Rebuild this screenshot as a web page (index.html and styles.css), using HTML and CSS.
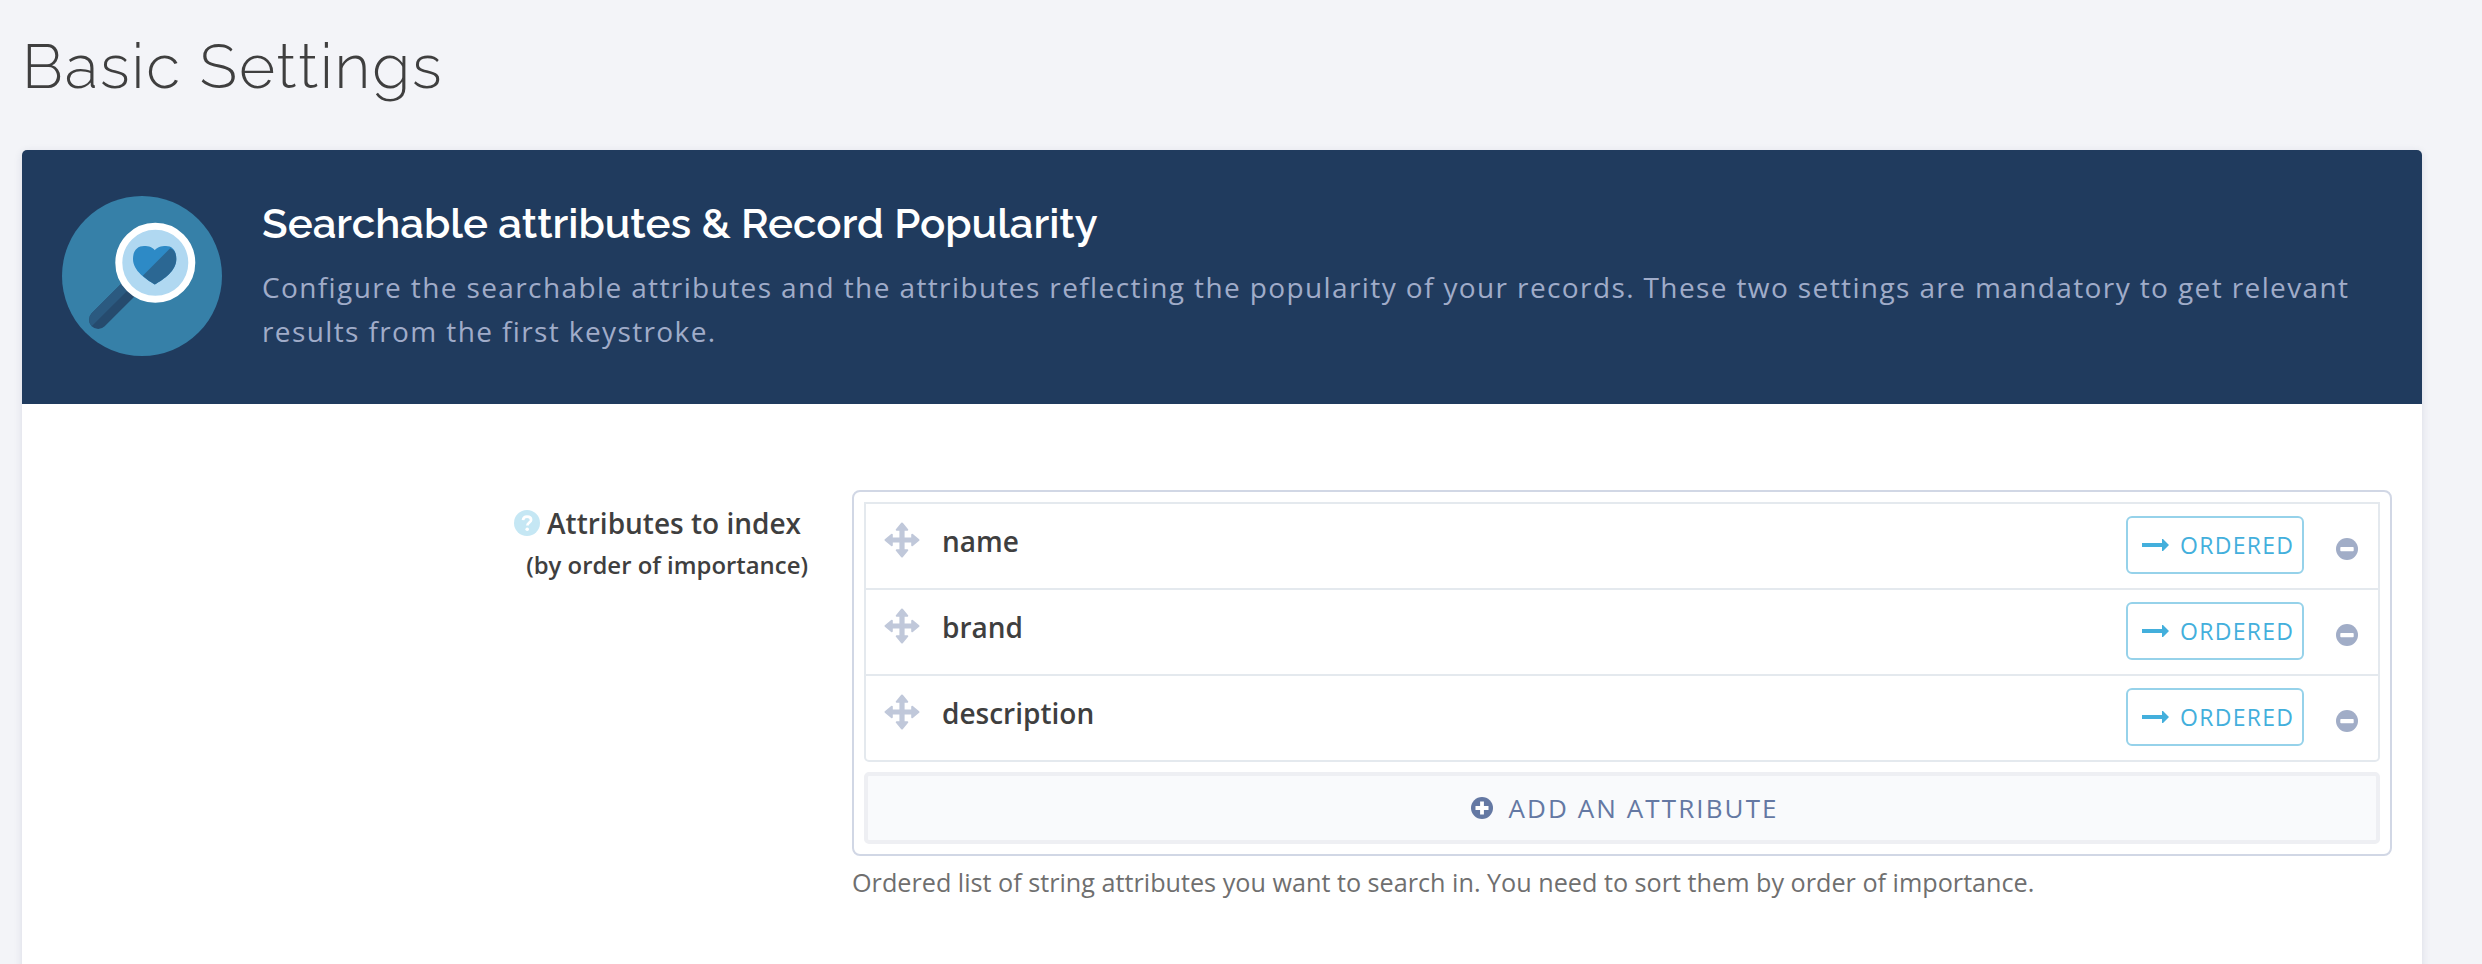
FILE: index.html
```html
<!DOCTYPE html>
<html lang="en">
<head>
<meta charset="utf-8">
<title>Basic Settings</title>
<link rel="stylesheet" href="styles.css">
</head>
<body>
<svg class="sprite" width="0" height="0" aria-hidden="true">
  <symbol id="move" viewBox="0 0 36 36">
    <path d="M18 1.500 L23.300 7.800 H19.600 V16.400 H28.200 V12.700 L34.500 18 L28.200 23.300 V19.600 H19.600 V28.200 H23.300 L18 34.500 L12.700 28.200 H16.400 V19.600 H7.800 V23.300 L1.500 18 L7.800 12.700 V16.400 H16.400 V7.800 H12.700 Z" fill="currentColor" stroke="currentColor" stroke-width="2" stroke-linejoin="round"/>
  </symbol>
  <symbol id="arrow" viewBox="0 0 27 12">
    <path d="M0 4 H20 V0 H21 L27 6 L21 12 H20 V8 H0 Z" fill="currentColor"/>
  </symbol>
  <symbol id="minus" viewBox="0 0 22 22">
    <circle cx="11" cy="11" r="11" fill="currentColor"/>
    <rect x="4.3" y="9" width="13.4" height="4.2" rx="0.8" fill="#fff"/>
  </symbol>
</svg>
<main class="page">
  <h1 class="title">Basic Settings</h1>
  <section class="panel">
    <header class="hero">
      <svg class="hero-icon" width="160" height="160" viewBox="0 0 160 160">
        <circle cx="80" cy="80" r="80" fill="#3680a8"/>
        <path d="M36.200 123.800 L80 80" stroke="#264b6e" stroke-width="18.4" stroke-linecap="round"/>
        <path d="M29.700 130.300 A9.200 9.200 0 0 1 29.700 117.300 L68 79 L75 85 Z" fill="#2b5a80"/>
        <circle cx="93.3" cy="66.8" r="36.5" fill="#b0d8f1" stroke="#fff" stroke-width="7"/>
        <path d="M92.800 88.500 C84 83 71 75 71 63 C71 54 76 50 82 50 C87 50 91 51.500 92.800 54.300 C94.600 51.500 99 50 104 50 C110 50 114.300 54 114.300 63 C114.300 75 102 83 92.800 88.500 Z" fill="#2d8ac6"/>
        <path d="M92.800 88.500 C89.500 86.400 85 84 80.800 79.800 L108.200 52.200 C112 53 114.300 57 114.300 63 C114.300 75 102 83 92.800 88.500 Z" fill="#2b6793"/>
      </svg>
      <div class="hero-text">
        <h2 class="hero-title">Searchable attributes &amp; Record Popularity</h2>
        <p class="hero-desc">Configure the searchable attributes and the attributes reflecting the popularity of your records. These two settings are mandatory to get relevant<br>results from the first keystroke.</p>
      </div>
    </header>
    <div class="form-row">
      <div class="label">
        <div class="label-main">
          <svg class="help" width="26" height="26" viewBox="0 0 26 26"><circle cx="13" cy="13" r="13" fill="#c5e7f4"/><path d="M9 10.200 C9.200 7.700 10.700 6.600 13.100 6.600 C15.500 6.600 17.100 8 17.100 9.900 C17.100 12.300 13.400 12.700 13.400 15.400" fill="none" stroke="#fff" stroke-width="2.700"/><circle cx="13.200" cy="19.300" r="1.800" fill="#fff"/></svg>
          <span>Attributes to index</span>
        </div>
        <div class="label-sub">(by order of importance)</div>
      </div>
      <div class="field">
        <div class="box">
          <ul class="list">
            <li class="item"><svg class="move" width="36" height="36"><use href="#move"/></svg><span class="name">name</span><button class="ordered"><svg width="27" height="12"><use href="#arrow"/></svg><span>ORDERED</span></button><svg class="minus" width="22" height="22"><use href="#minus"/></svg></li>
            <li class="item"><svg class="move" width="36" height="36"><use href="#move"/></svg><span class="name">brand</span><button class="ordered"><svg width="27" height="12"><use href="#arrow"/></svg><span>ORDERED</span></button><svg class="minus" width="22" height="22"><use href="#minus"/></svg></li>
            <li class="item"><svg class="move" width="36" height="36"><use href="#move"/></svg><span class="name">description</span><button class="ordered"><svg width="27" height="12"><use href="#arrow"/></svg><span>ORDERED</span></button><svg class="minus" width="22" height="22"><use href="#minus"/></svg></li>
          </ul>
          <button class="add"><svg width="22" height="22" viewBox="0 0 22 22"><circle cx="11" cy="11" r="11" fill="#6478a3"/><path d="M11 4.500 V17.500 M4.500 11 H17.500" stroke="#fff" stroke-width="3.800"/></svg><span>ADD AN ATTRIBUTE</span></button>
        </div>
        <p class="hint">Ordered list of string attributes you want to search in. You need to sort them by order of importance.</p>
      </div>
    </div>
  </section>
</main>
</body>
</html>
```
FILE: styles.css
```css
* { box-sizing: border-box; }
body { margin: 0; background: #f3f4f8; font-family: "Open Sans", "Noto Sans", sans-serif; color: #3f3f3f; }
h1, h2, p, ul { margin: 0; padding: 0; }
button { margin: 0; padding: 0; font-family: inherit; }
.sprite { position: absolute; }
.page { height: 964px; padding: 0 60px 0 22px; overflow: hidden; }
.title { height: 150px; padding-top: 27px; font: 300 62px/80px Raleway, Lato, sans-serif; letter-spacing: 1.83px; }
.panel { height: 900px; background: #fff; border-radius: 5px; box-shadow: 0 2px 8px rgba(40, 50, 90, .12); }
.hero { display: flex; gap: 40px; height: 254px; padding: 46px 40px 0; background: #203b5e; border-radius: 5px 5px 0 0; }
.hero-icon { flex: none; }
.hero-title { font: 600 42px/56px Raleway, Lato, sans-serif; color: #fff; white-space: nowrap; }
.hero-desc { margin-top: 13px; font-size: 28px; line-height: 44px; letter-spacing: 1.386px; color: #a0acc9; white-space: nowrap; }
.form-row { display: flex; padding: 86px 30px 0 0; }
.label { width: 830px; padding: 11px 44px 0 0; text-align: right; font-weight: 600; }
.label-main { display: flex; justify-content: flex-end; align-items: center; gap: 7px; height: 44px; padding-right: 7px; font-size: 28px; }
.label-sub { font-size: 23.9px; line-height: 40px; }
.field { flex: 1; }
.box { height: 366px; padding: 10px; border: 2px solid #d1d7e5; border-radius: 8px; }
.list { height: 260px; border: 2px solid #e4e9ee; border-radius: 0 0 5px 5px; list-style: none; }
.item { display: flex; align-items: flex-start; height: 86px; padding: 12px 20px 0 18px; border-bottom: 2px solid #e4e9ee; }
.item:last-child { border-bottom: 0; }
.move { margin-top: 6px; color: #c0c8da; }
.name { flex: 1; margin-left: 22px; padding-top: 5px; font-size: 28px; font-weight: 600; line-height: 40px; }
.ordered { display: flex; align-items: center; gap: 11px; width: 178px; height: 58px; padding-left: 14px; border: 2px solid #96d2ea; border-radius: 6px; background: #fff; color: #43afdc; font-size: 23px; letter-spacing: 1.3px; }
.minus { margin: 22px 0 0 32px; color: #a1adc7; }
.add { display: flex; align-items: center; justify-content: center; gap: 15px; width: 100%; height: 72px; margin-top: 10px; padding: 0 0 0 6px; border: 4px solid #eeeff3; border-radius: 5px; background: #f9fafc; color: #6478a3; font-size: 26px; letter-spacing: 2.1px; }
.hint { font-size: 25.2px; line-height: 40px; margin-top: 6px; color: #6f6f6f; white-space: nowrap; }
```
